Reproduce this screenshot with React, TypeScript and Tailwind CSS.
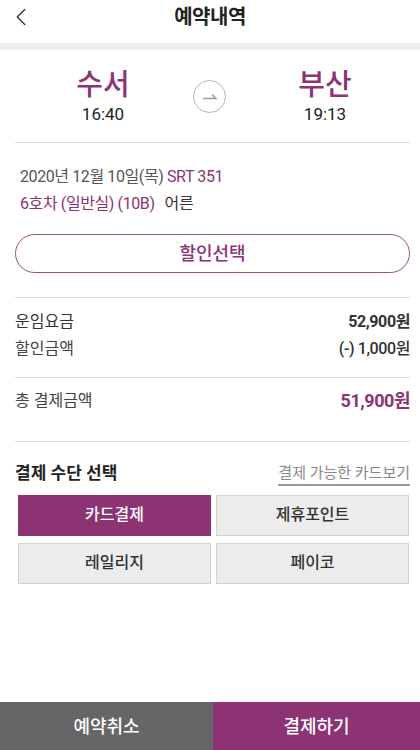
import { ChevronLeft } from 'lucide-react';

const purple = 'text-[#8c3373]';

const payMethods = ['카드결제', '제휴포인트', '레일리지', '페이코'];

export default function App() {
  const selected = '카드결제';

  return (
    <div
      className="min-h-[750px] w-[420px] flex flex-col bg-white text-[#222]"
      style={{ fontFamily: "Roboto, 'Noto Sans CJK KR', sans-serif" }}
    >
      {/* header */}
      <div className="h-[43px] pb-[10px] grid grid-cols-[48px_1fr_48px] items-center">
        <div className="pl-[6px]">
          <ChevronLeft size={30} strokeWidth={1.1} className="text-[#333]" />
        </div>
        <h1 className="text-center text-[20px] font-bold tracking-tight leading-none">예약내역</h1>
        <div />
      </div>
      <div className="h-[7px] bg-[#efefef]" />

      {/* route */}
      <div className="ml-[15px] mr-[10px] h-[93px] flex items-center border-b border-[#dcdcdc]">
        <div className="ml-[18px] w-[140px] flex flex-col items-center">
          <span className={`text-[29px] font-medium leading-[34px] ${purple}`}>수서</span>
          <span className="text-[17px] leading-[22px] mt-[1px]">16:40</span>
        </div>
        <div className="ml-[20px] w-[33px] h-[33px] rounded-full border border-[#b5b5b5] flex items-center justify-center">
          <svg width="14" height="8" viewBox="0 0 14 8" fill="none" stroke="#9a9a9a" strokeWidth="1.3">
            <path d="M0 6.5h13L9 2.5" />
          </svg>
        </div>
        <div className="ml-[29px] w-[140px] flex flex-col items-center">
          <span className={`text-[29px] font-medium leading-[34px] ${purple}`}>부산</span>
          <span className="text-[17px] leading-[22px] mt-[1px]">19:13</span>
        </div>
      </div>

      {/* train info */}
      <div className="ml-[15px] mr-[10px] pt-[20px] pb-[24px] border-b border-[#dcdcdc]">
        <div className="pl-[5px] text-[16px] leading-[27px] tracking-tight">
          <p className="text-[#555]">
            2020년 12월 10일(목) <span className={purple}>SRT 351</span>
          </p>
          <p>
            <span className={purple}>6호차 (일반실) (10B)</span>
            <span className="ml-[10px] text-[#333]">어른</span>
          </p>
        </div>
        <button className={`mt-[17px] w-full h-[39px] rounded-full border border-[#9b4e86] text-[18px] font-medium ${purple}`}>
          할인선택
        </button>
      </div>

      {/* fares */}
      <div className="ml-[15px] mr-[10px] pt-[10px] pb-[15px] border-b border-[#dcdcdc] text-[16px]">
        <div className="flex justify-between items-center h-[27px]">
          <span className="text-[#333]">운임요금</span>
          <span className="font-bold text-[#333] tracking-tight">52,900원</span>
        </div>
        <div className="flex justify-between items-center h-[27px]">
          <span className="text-[#444]">할인금액</span>
          <span className="font-medium text-[#333] tracking-tight">(-) 1,000원</span>
        </div>
      </div>
      <div className="ml-[15px] mr-[10px] h-[64px] pb-[18px] flex justify-between items-center border-b border-[#dcdcdc]">
        <span className="text-[16px] text-[#444]">총 결제금액</span>
        <span className={`text-[18px] font-bold tracking-tight ${purple}`}>51,900원</span>
      </div>

      {/* payment */}
      <div className="ml-[15px] mr-[10px] pt-[19px]">
        <div className="flex justify-between items-center">
          <span className="text-[17px] font-bold">결제 수단 선택</span>
          <span className="text-[15px] text-[#888] border-b-2 border-[#999] leading-[22px]">결제 가능한 카드보기</span>
        </div>
        <div className="mt-[8px] ml-[3px] mr-[1px] grid grid-cols-2 gap-x-[5px] gap-y-[7px]">
          {payMethods.map((m) => (
            <button
              key={m}
              className={`h-[41px] text-[16px] font-medium ${
                m === selected
                  ? 'bg-[#8c3373] text-white'
                  : 'bg-[#ececec] border border-[#d2d2d2] text-[#333]'
              }`}
            >
              {m}
            </button>
          ))}
        </div>
      </div>

      {/* bottom bar */}
      <div className="mt-auto h-[48px] grid grid-cols-[213px_1fr] text-white text-[18px] font-medium">
        <button className="bg-[#666666]">예약취소</button>
        <button className="bg-[#8c3373]">결제하기</button>
      </div>
    </div>
  );
}
